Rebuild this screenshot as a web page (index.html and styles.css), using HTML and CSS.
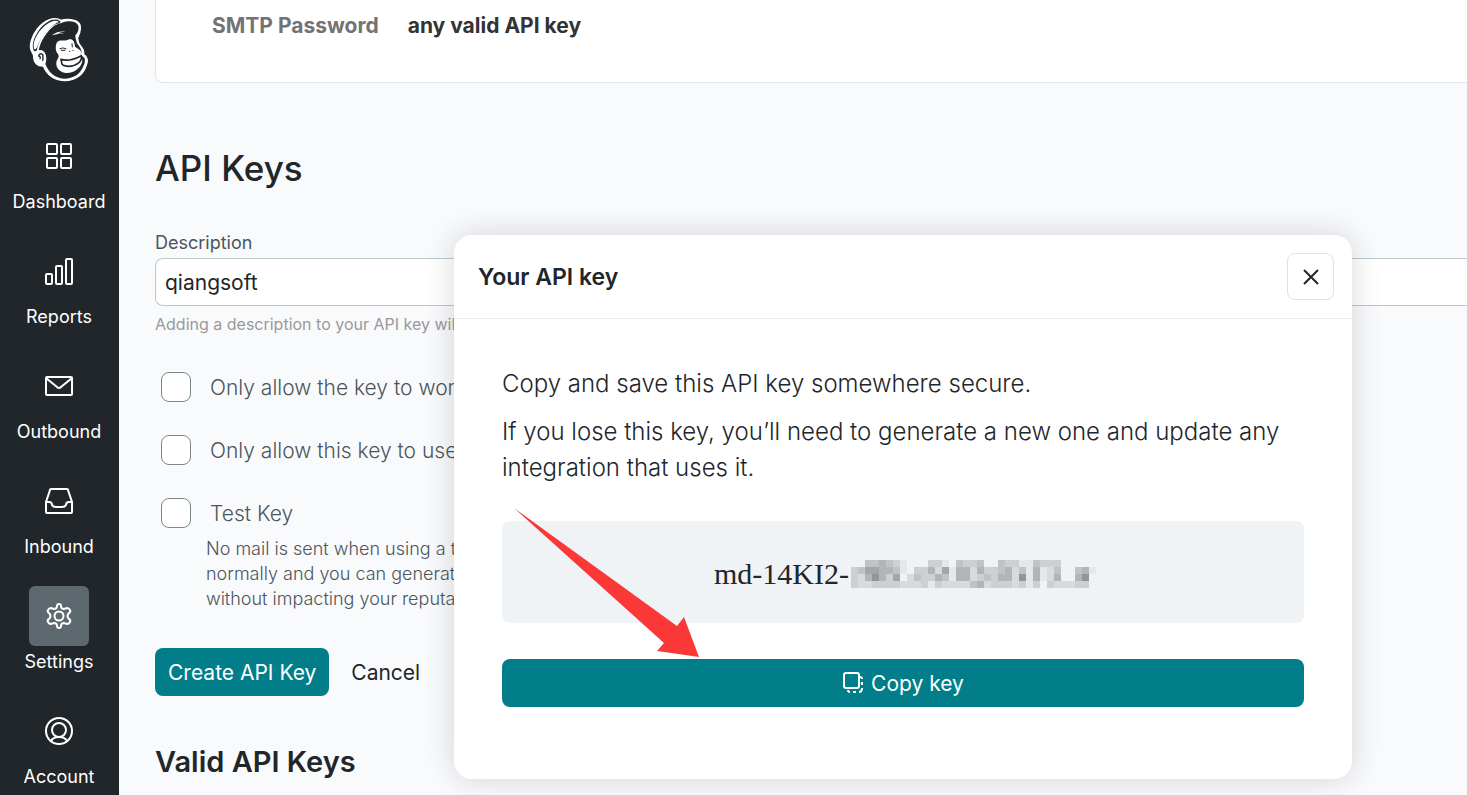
FILE: index.html
```
<!DOCTYPE html>
<html lang="en">
<head>
    <meta charset="UTF-8">
    <meta name="viewport" content="width=device-width, initial-scale=1.0">
    <title>API Keys</title>
    <link rel="stylesheet" href="styles.css">
</head>
<body>

<nav class="sidebar">
    <a class="logo" href="#" aria-label="Home">
        <svg width="60" height="65" viewBox="91 51 178 195">
            <path d="M97 152C90 138 97 110 115 87C135 61 165 48 186 61C203 56 232 57 242 72C248 88 241 103 236 113C235 125 240 133 247 141C254 149 255 157 254 164C264 169 268 181 262 195C254 222 231 243 195 242C164 240 143 222 133 198C115 199 104 188 104 169C103 160 98 156 97 152Z" fill="#fff" stroke="#fff" stroke-width="4"/>
            <path d="M104 151C96 132 108 105 123 86C143 63 165 53 182 62C187 65 184 68 180 70C153 75 122 112 114 149C111 155 106 155 104 151Z" fill="#21262a"/>
            <path d="M105 147C100 128 112 104 127 88C144 69 164 57 180 65C162 73 140 94 124 121C114 138 113 152 105 147Z" fill="#fff"/>
            <path d="M119 150C125 123 143 95 162 80C176 70 188 70 194 66C209 62 229 62 237 75C242 86 235 101 229 106C229 115 232 122 234 130C245 145 252 155 244 164L252 170C259 173 260 186 253 199C244 223 223 236 195 236C167 234 149 218 139 192C145 179 142 157 129 151Z" fill="#21262a"/>
            <path d="M174 127C181 117 195 124 207 119C219 115 227 122 228 140C237 147 249 151 246 159C242 165 250 173 250 182C248 202 225 220 202 219C184 219 170 205 172 187C174 177 183 172 177 162C168 153 169 137 174 127Z" fill="#fff"/>
            <path d="M186 178C203 184 228 177 247 167C251 186 230 199 208 199C195 198 187 195 188 188Z" fill="#fff" stroke="#21262a" stroke-width="5" stroke-linejoin="round"/>
            <path d="M183 146Q191 141 201 146M187 151L198 151M219 131L220 141" fill="none" stroke="#21262a" stroke-width="3" stroke-linecap="round"/>
            <circle cx="212" cy="154" r="2" fill="#21262a"/><circle cx="222" cy="151" r="2" fill="#21262a"/>
            <path d="M159 106Q174 92 200 95Q184 95 176 101Q187 98 206 101Q182 99 159 106Z" fill="#fff"/>
            <ellipse cx="125" cy="172" rx="15" ry="20" fill="#fff"/>
            <path d="M119 168C121 158 133 160 132 169C130 174 134 176 131 181M119 168Q126 170 123 176" fill="none" stroke="#21262a" stroke-width="4" stroke-linecap="round"/>
        </svg>
    </a>
    <a class="nav-item" href="#">
        <span class="nav-icon">
            <svg width="30" height="30" viewBox="0 0 30 30"><rect x="3" y="3" width="10" height="10" rx="1"/><rect x="17" y="3" width="10" height="10" rx="1"/><rect x="3" y="17" width="10" height="10" rx="1"/><rect x="17" y="17" width="10" height="10" rx="1"/></svg>
        </span>
        Dashboard
    </a>
    <a class="nav-item" href="#">
        <span class="nav-icon">
            <svg width="30" height="30" viewBox="0 0 30 30"><rect x="2" y="18" width="6" height="10" rx="1"/><rect x="12" y="10" width="6" height="18" rx="1"/><rect x="22" y="3" width="6" height="25" rx="1"/></svg>
        </span>
        Reports
    </a>
    <a class="nav-item" href="#">
        <span class="nav-icon">
            <svg width="30" height="30" viewBox="0 0 30 30"><rect x="2" y="6" width="26" height="18" rx="1"/><path d="M2 7L13 16Q15 18 17 16L28 7"/></svg>
        </span>
        Outbound
    </a>
    <a class="nav-item" href="#">
        <span class="nav-icon">
            <svg width="30" height="30" viewBox="0 0 30 30"><path d="M2 16L6 4Q6 3 7 3H23Q24 3 24 4L28 16V26Q28 27 27 27H3Q2 27 2 26ZM2 16H5Q8 16 8 19Q9 21 12 21H18Q21 21 22 19Q22 16 25 16H28"/></svg>
        </span>
        Inbound
    </a>
    <a class="nav-item active" href="#">
        <span class="nav-icon">
            <svg width="30" height="30" viewBox="0 0 30 30"><path d="M13 5Q13 3 15 3T17 5Q17 8 20 8L23 7Q25 7 26 9T25 12Q22 15 25 18Q27 19 26 21T23 23L20 22Q17 22 17 25Q17 27 15 27T13 25Q13 22 10 22L7 23Q5 23 4 21T5 18Q8 15 5 12Q3 11 4 9T7 7L10 8Q13 8 13 5Z"/><circle cx="15" cy="15" r="4.5"/></svg>
        </span>
        Settings
    </a>
    <a class="nav-item" href="#">
        <span class="nav-icon">
            <svg width="30" height="30" viewBox="0 0 30 30"><circle cx="15" cy="15" r="13"/><circle cx="15" cy="14" r="7"/><path d="M7 25Q9 21 15 21T23 25"/></svg>
        </span>
        Account
    </a>
</nav>

<main class="content">
    <section class="smtp-card">
        <dl class="smtp-row">
            <dt>SMTP Password</dt>
            <dd>any valid API key</dd>
        </dl>
    </section>

    <h1>API Keys</h1>

    <form class="key-form">
        <label class="field-label" for="description">Description</label>
        <input class="text-input" type="text" id="description" value="qiangsoft">
        <p class="help">Adding a description to your API key will help</p>

        <div class="check-row">
            <input type="checkbox" id="only-ips">
            <label for="only-ips">Only allow the key to work</label>
        </div>
        <div class="check-row">
            <input type="checkbox" id="only-calls">
            <label for="only-calls">Only allow this key to use</label>
        </div>
        <div class="check-row">
            <input type="checkbox" id="test-key">
            <label for="test-key">Test Key</label>
        </div>
        <p class="test-note">No mail is sent when using a test<br>normally and you can generate<br>without impacting your reputation</p>

        <div class="actions">
            <button class="btn" type="submit">Create API Key</button>
            <button class="btn-link" type="button">Cancel</button>
        </div>
    </form>

    <h2>Valid API Keys</h2>
</main>

<div class="overlay">
    <div class="modal" role="dialog" aria-labelledby="modal-title">
        <header class="modal-header">
            <h3 id="modal-title">Your API key</h3>
            <button class="close" type="button" aria-label="Close">
                <svg width="16" height="16" viewBox="0 0 16 16"><path d="M1 1L15 15M15 1L1 15"/></svg>
            </button>
        </header>
        <div class="modal-body">
            <p>Copy and save this API key somewhere secure.</p>
            <p>If you lose this key, you’ll need to generate a new one and update any integration that uses it.</p>
            <div class="key-box">
                <span>md-14KI2-</span>
                <svg class="mosaic" id="mosaic" width="245" height="28" viewBox="0 0 35 4" shape-rendering="crispEdges"></svg>
            </div>
            <button class="btn copy" type="button">
                <svg width="22" height="22" viewBox="0 0 22 22"><rect x="2" y="1" width="15" height="15" rx="2"/><path d="M18 5Q20 5 20 7M20 10V13M20 16Q20 20 17 20M14 20H11M8 20Q6 20 6 18"/></svg>
                Copy key
            </button>
            <svg class="arrow" width="186" height="150" viewBox="0 0 186 150"><path d="M0 0L163 118L170 109L185 149L143 143L150 135Z"/></svg>
        </div>
    </div>
</div>

<script>
    // grey levels of the hidden part of the key, one character per cell (0 = background)
    const rows = [
        "00445431000331043340043311433300000",
        "34665541033526155253345241512400451",
        "32575360243354155234355271512500570",
        "32233332223132222452333231303222330"
    ];
    const greys = ["#eff3f6", "#e4e8eb", "#d7dbde", "#ccd0d2", "#c0c3c5", "#b2b5b8", "#a3a6a8", "#919597"];
    const mosaic = document.getElementById("mosaic");

    rows.forEach((row, y) => {
        [...row].forEach((level, x) => {
            const cell = document.createElementNS("http://www.w3.org/2000/svg", "rect");
            cell.setAttribute("x", x);
            cell.setAttribute("y", y);
            cell.setAttribute("width", 1);
            cell.setAttribute("height", 1);
            cell.setAttribute("fill", greys[level]);
            mosaic.appendChild(cell);
        });
    });
</script>

</body>
</html>
```
FILE: styles.css
```
* {
    box-sizing: border-box;
    margin: 0;
    padding: 0;
}
body {
    display: flex;
    height: 100vh;
    overflow: hidden;
    background: #f9fafc;
    color: #21262a;
    font-family: Inter, "Liberation Sans", sans-serif;
}
button, input {
    font-family: inherit;
}
svg {
    flex: none;
}

/* sidebar */
.sidebar {
    width: 119px;
    flex: none;
    padding-right: 1px;
    background: #21262a;
    display: flex;
    flex-direction: column;
    align-items: center;
}
.logo {
    height: 65px;
    margin: 17px 0 44px;
}
.nav-item {
    display: flex;
    flex-direction: column;
    align-items: center;
    gap: 4px;
    width: 100%;
    height: 115px;
    flex: none;
    color: white;
    font-size: 18px;
    line-height: 24px;
    text-decoration: none;
}
.nav-icon {
    display: flex;
    align-items: center;
    justify-content: center;
    width: 60px;
    height: 60px;
    border-radius: 6px;
}
.nav-icon svg {
    fill: none;
    stroke: white;
    stroke-width: 2;
}
.active .nav-icon {
    background: #5d686f;
}

/* page */
.content {
    flex: 1;
    min-width: 0;
    padding-left: 36px;
}
.smtp-card {
    height: 83px;
    padding: 10px 56px;
    background: white;
    border: 1px solid #dfe5ea;
    border-width: 0 0 1px 1px;
    border-bottom-left-radius: 8px;
}
.smtp-row {
    display: flex;
    gap: 29px;
    font-size: 21px;
    line-height: 32px;
    font-weight: 700;
}
.smtp-row dt {
    color: #737373;
}
.smtp-row dd {
    color: #333;
}
h1 {
    margin: 61px 0 40px;
    font-size: 35px;
    line-height: 48px;
    font-weight: 500;
}
.key-form {
    color: #4c555b;
}
.field-label {
    display: block;
    margin-bottom: 4px;
    font-size: 18px;
    line-height: 22px;
}
.text-input {
    display: block;
    width: 100%;
    height: 48px;
    padding: 0 9px;
    border: 1px solid #bcc8ce;
    border-right: 0;
    border-radius: 8px 0 0 8px;
    background: white;
    color: #21262a;
    font-size: 21px;
}
.help {
    margin: 6px 0 36px;
    color: #999;
    font-size: 16px;
    line-height: 24px;
    white-space: nowrap;
}
.check-row {
    display: flex;
    align-items: center;
    gap: 19px;
    height: 30px;
    margin: 0 0 33px 6px;
    font-size: 21px;
    font-weight: 300;
    white-space: nowrap;
}
.check-row input {
    appearance: none;
    flex: none;
    width: 30px;
    height: 30px;
    border: 1px solid #7b878d;
    border-radius: 8px;
    background: white;
}
.test-note {
    margin: -25px 0 37px 51px;
    font-size: 18px;
    font-weight: 300;
    line-height: 25px;
    white-space: nowrap;
}
.actions {
    display: flex;
    gap: 22px;
}
.btn {
    height: 48px;
    padding: 0 13px;
    border: none;
    border-radius: 8px;
    background: #017e89;
    color: white;
    font-size: 21px;
    cursor: pointer;
}
.btn-link {
    border: none;
    background: none;
    color: #21262a;
    font-size: 21px;
    cursor: pointer;
}
h2 {
    margin-top: 46px;
    font-size: 29px;
    line-height: 40px;
    font-weight: 600;
}

/* modal */
.overlay {
    position: absolute;
    inset: 0;
    padding: 235px 115px 16px 454px;
}
.modal {
    background: white;
    border-radius: 18px;
    box-shadow: 0 0 30px rgba(33, 38, 42, 0.18);
}
.modal-header {
    display: flex;
    align-items: center;
    justify-content: space-between;
    height: 84px;
    padding: 0 18px 0 24px;
    border-bottom: 1px solid #e7ecf0;
}
h3 {
    font-size: 23px;
    line-height: 32px;
    font-weight: 600;
}
.close {
    display: flex;
    align-items: center;
    justify-content: center;
    width: 47px;
    height: 47px;
    border: 1px solid #dbe3e8;
    border-radius: 8px;
    background: white;
    cursor: pointer;
}
.close svg {
    fill: none;
    stroke: #21262a;
    stroke-width: 2;
}
.modal-body {
    position: relative;
    padding: 47px 48px 72px;
    font-size: 24px;
    font-weight: 300;
    line-height: 36px;
}
.modal-body p {
    margin-bottom: 12px;
}
.key-box {
    display: flex;
    align-items: center;
    justify-content: center;
    gap: 2px;
    height: 102px;
    margin: 35px 0 36px;
    padding: 4px 0 0 4px;
    border-radius: 8px;
    background: #eff3f6;
    font-family: "Liberation Serif", serif;
    font-size: 30px;
}
.copy {
    display: flex;
    align-items: center;
    justify-content: center;
    gap: 7px;
    width: 100%;
}
.copy svg {
    fill: none;
    stroke: white;
    stroke-width: 2;
}
.arrow {
    position: absolute;
    left: 60px;
    top: 189px;
    fill: #fb3838;
}
```
